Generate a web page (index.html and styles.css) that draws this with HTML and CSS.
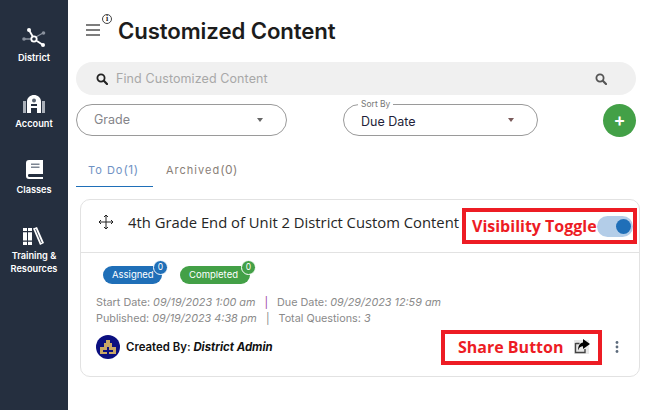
FILE: index.html
```html
<!DOCTYPE html>
<html lang="en">
<head>
<meta charset="utf-8">
<title>Customized Content</title>
<link rel="stylesheet" href="styles.css">
</head>
<body>
<div class="app">
  <nav class="sidebar">
    <a class="nav-item nav-district">
      <svg class="nav-icon" width="24" height="19" viewBox="0 0 24 19"><g stroke="#8a929e" stroke-width="1.300"><path d="M2 11h8M14 9l7-4"/></g><g stroke="#fff" stroke-width="1.800" fill="none"><path d="M7 2l4 7"/><path d="M15 13l6 4"/></g><circle cx="7" cy="2" r="2" fill="#fff"/><circle cx="12" cy="11" r="2.700" fill="none" stroke="#fff" stroke-width="1.800"/><circle cx="21" cy="17" r="2" fill="#fff"/><circle cx="2" cy="11" r="1.800" fill="#8a929e"/><circle cx="21.500" cy="5" r="1.800" fill="#8a929e"/></svg>
      <span>District</span>
    </a>
    <a class="nav-item nav-account">
      <svg class="nav-icon" width="22" height="18" viewBox="0 0 22 18"><path d="M0 6h3v12H0zM19 6h3v12h-3z" fill="#aab0b9"/><path d="M4 18V6.500C4 2.500 7.500 0 11 0s7 2.500 7 6.500V18h-4v-5H8v5z" fill="#fff"/><circle cx="11" cy="5.500" r="2" fill="#5a6472"/><rect x="8" y="9" width="6" height="2" fill="#252f3f"/></svg>
      <span>Account</span>
    </a>
    <a class="nav-item nav-classes">
      <svg class="nav-icon" width="17" height="19" viewBox="0 0 17 19"><path d="M3 0h14v14H3a1.600 1.600 0 0 0 0 3h14v2H3a3 3 0 0 1-3-3V3a3 3 0 0 1 3-3z" fill="#fff"/><path d="M5 3.500h8.500V5H5zM5 6.500h8.500V8H5z" fill="#7c8592"/></svg>
      <span>Classes</span>
    </a>
    <a class="nav-item nav-training">
      <svg class="nav-icon" width="21" height="18" viewBox="0 0 21 18"><path d="M0 1h4v17H0zM5 1h4v17H5z" fill="#fff"/><path d="M10 1.500L14 0l7 16-4 2z" fill="#fff"/><path d="M0 4h9v1.200H0zM0 13.500h9v1.200H0z" fill="#252f3f"/><path d="M12.500 2l6 14" stroke="#252f3f" stroke-width="0.800"/></svg>
      <span>Training &amp;<br>Resources</span>
    </a>
  </nav>
  <main class="main">
    <header class="page-head">
      <span class="menu-btn"><i></i><i></i><i></i></span>
      <span class="info-dot">i</span>
      <h1>Customized Content</h1>
    </header>
    <div class="search">
      <svg width="12" height="12" viewBox="0 0 12 12"><circle cx="5" cy="5" r="3.600" fill="none" stroke="#222" stroke-width="1.800"/><path d="M7.800 7.800L11 11" stroke="#222" stroke-width="2.200" stroke-linecap="round"/></svg>
      <span class="search-text">Find Customized Content</span>
      <svg class="search-end" width="12" height="12" viewBox="0 0 12 12"><circle cx="5" cy="5" r="3.600" fill="none" stroke="#555" stroke-width="1.800"/><path d="M7.800 7.800L11 11" stroke="#555" stroke-width="2.200" stroke-linecap="round"/></svg>
    </div>
    <div class="filters">
      <div class="select select-grade"><span class="select-value muted">Grade</span><b class="caret"></b></div>
      <div class="select select-sort"><span class="select-label">Sort By</span><span class="select-value">Due Date</span><b class="caret caret-red"></b></div>
      <div class="add-btn">+</div>
    </div>
    <div class="tabs">
      <span class="tab tab-active">To Do<em>(1)</em></span>
      <span class="tab tab-archived">Archived<em>(0)</em></span>
    </div>
    <section class="card">
      <div class="card-head">
        <svg width="16" height="16" viewBox="0 0 16 16" fill="none" stroke="#222" stroke-width="1"><path d="M8 1v14M1 8h14M6 3l2-2 2 2M6 13l2 2 2-2M3 6L1 8l2 2M13 6l2 2-2 2"/></svg>
        <h2>4th Grade End of Unit 2 District Custom Content</h2>
      </div>
      <div class="card-body">
        <div class="chips">
          <span class="chip chip-blue">Assigned<b>0</b></span>
          <span class="chip chip-green">Completed<b>0</b></span>
        </div>
        <p class="meta">Start Date: <i>09/19/2023 1:00 am</i> <span class="sep-purple">|</span> Due Date: <i>09/29/2023 12:59 am</i></p>
        <p class="meta">Published: <i>09/19/2023 4:38 pm</i> <span class="sep">|</span> Total Questions: <i>3</i></p>
        <div class="card-foot">
          <svg width="24" height="24" viewBox="0 0 24 24"><circle cx="12" cy="12" r="12" fill="#0b0f80"/><path d="M4 19v-7h4V8h2V5h4v3h2v4h4v7z" fill="#c9a765"/><path d="M7 15h10v2H7zM11 12h2v7h-2z" fill="#0b0f80"/></svg>
          <span class="author">Created By: <i>District Admin</i></span>
          <svg class="kebab" width="4" height="14" viewBox="0 0 4 14"><circle cx="2" cy="2.500" r="1.400" fill="#5d6b7c"/><circle cx="2" cy="7" r="1.400" fill="#5d6b7c"/><circle cx="2" cy="11.500" r="1.400" fill="#5d6b7c"/></svg>
        </div>
      </div>
    </section>
  </main>
  <div class="note note-toggle">
    <span class="note-text">Visibility Toggle</span>
    <span class="toggle"><i></i></span>
  </div>
  <div class="note note-share">
    <span class="note-text">Share Button</span>
    <svg width="16" height="15" viewBox="0 0 16 15"><rect x="0" y="1" width="15" height="14" fill="#e8e8e8"/><path d="M1.500 4.500h4M1.500 4v9.500h9.500V10" fill="none" stroke="#444" stroke-width="1.400"/><path d="M9 0l7 5-7 5V7.300C6.500 7.300 5 8.500 4 11.500c0-4.500 2-7.500 5-8z" fill="#000"/></svg>
  </div>
</div>
</body>
</html>
```
FILE: styles.css
```css
* { box-sizing: border-box; }
html, body { margin: 0; height: 100%; background: #fff; overflow: hidden; }
body { font-family: Inter, "Liberation Sans", sans-serif; color: #222; }
p, h1, h2 { margin: 0; }

.app { position: relative; display: flex; width: 651px; height: 410px; }

.sidebar {
  width: 68px;
  flex: none;
  background: #252f3f;
  color: #fff;
  display: flex;
  flex-direction: column;
  align-items: center;
  padding-top: 28px;
}
.nav-item {
  display: flex;
  flex-direction: column;
  align-items: center;
  gap: 4px;
  font-size: 9.200px;
  font-weight: 600;
  line-height: 13px;
  text-align: center;
}
.nav-icon { display: block; }
.nav-account { margin-top: 31px; }
.nav-classes { margin-top: 30px; }
.nav-training { margin-top: 31px; }

.main { flex: 1; min-width: 0; padding: 0 15px 0 8px; }

.page-head { position: relative; display: flex; align-items: center; height: 62px; padding: 0 0 2px 10px; }
.menu-btn { display: flex; flex-direction: column; gap: 3px; width: 14px; }
.menu-btn i { display: block; height: 2px; background: #7d7d7d; }
.info-dot {
  position: absolute;
  left: 26px;
  top: 14px;
  width: 10px;
  height: 10px;
  border: 1px solid #444;
  border-radius: 50%;
  font: 700 8px/8px "Liberation Serif", serif;
  text-align: center;
  color: #222;
}
h1 { margin-left: 18px; font-size: 22.200px; font-weight: 600; color: #1c1c1c; letter-spacing: -0.1px; }

.search {
  display: flex;
  align-items: center;
  height: 33px;
  padding: 0 29px 0 20px;
  border-radius: 17px;
  background: #f0f0f0;
  font-size: 12.500px;
}
.search-text { margin-left: 8px; color: #a8a8a8; letter-spacing: 0.1px; }
.search-end { margin-left: auto; }

.filters { display: flex; align-items: center; margin-top: 9px; height: 32px; }
.select {
  position: relative;
  display: flex;
  align-items: center;
  justify-content: space-between;
  height: 32px;
  border: 1px solid #9a9a9a;
  border-radius: 16px;
  padding: 0 23px 0 17px;
  font-size: 12.500px;
}
.select-grade { width: 211px; }
.select-sort { width: 195px; margin-left: 56px; }
.select-value { color: #1f1f3a; margin-top: 3px; }
.select-value.muted { color: #85858a; margin-top: -2px; }
.select-label {
  position: absolute;
  left: 14px;
  top: -6px;
  padding: 0 3px;
  background: #fff;
  font-size: 8.500px;
  line-height: 11px;
  color: #777;
}
.caret { width: 0; height: 0; border: 3.500px solid transparent; border-top: 4px solid #666; border-bottom: 0; }
.caret-red { border-top-color: #7a5a5a; }
.add-btn {
  width: 33px;
  height: 33px;
  margin-left: auto;
  border-radius: 50%;
  background: #43a047;
  color: #fff;
  font-size: 18px;
  font-weight: 600;
  line-height: 32px;
  text-align: center;
}

.tabs { display: flex; margin-top: 19px; height: 32px; font-size: 11px; letter-spacing: 1px; color: #8a8078; }
.tab { padding: 7px 12px 0; }
.tab em { font-style: normal; font-size: 12px; letter-spacing: 0.5px; }
.tab-active { width: 77px; color: #6f92c4; border-bottom: 1px solid #1f6fb8; }
.tab-archived { padding-left: 13px; }

.card {
  margin: 12px 0 0 4px;
  width: 560px;
  height: 178px;
  border: 1px solid #e2e2e2;
  border-radius: 10px;
}
.card-head {
  display: flex;
  align-items: center;
  height: 53px;
  padding: 0 0 8px 17px;
  border-bottom: 1px solid #e2e2e2;
}
.card-head h2 { margin-left: 14px; font: 400 14.800px "Open Sans", sans-serif; color: #262626; }
.card-body { padding: 13px 15px 0 15px; }
.chips { display: flex; gap: 18px; height: 18px; margin: 0 0 11px 7px; }
.chip {
  position: relative;
  display: block;
  height: 18px;
  padding: 0 9px;
  border-radius: 9px;
  color: #fff;
  font-size: 9.500px;
  line-height: 18px;
}
.chip-blue { width: 59px; background: #1f6fb8; }
.chip-green { width: 70px; background: #43a047; }
.chip b {
  position: absolute;
  right: -6px;
  top: -6px;
  width: 15px;
  height: 15px;
  border: 1px solid #fff;
  border-radius: 50%;
  background: inherit;
  font-size: 8.500px;
  font-weight: 400;
  line-height: 13px;
  text-align: center;
}
.meta { font-size: 10.800px; line-height: 16px; color: #8a8a8a; }
.sep-purple { color: #9b3fa0; margin: 0 6px; }
.sep { margin: 0 6px; }
.card-foot { display: flex; align-items: center; margin-top: 8px; height: 24px; }
.author { margin-left: 6px; font-size: 11.400px; font-weight: 600; color: #111; }
.author i { font-weight: 700; }
.kebab { margin-left: auto; margin-right: 5px; }

.note {
  position: absolute;
  display: flex;
  align-items: center;
  border: 4px solid #ed1c24;
  background: #fff;
  font: 700 16px "Open Sans", sans-serif;
  color: #ed1c24;
}
.note-text { white-space: nowrap; }
.note-toggle { left: 462px; top: 208px; width: 175px; height: 36px; padding-left: 6px; }
.toggle { flex: none; width: 36px; height: 21px; margin-left: auto; border-radius: 11px; background: #b3cde8; display: flex; align-items: center; justify-content: flex-end; padding-right: 2px; }
.toggle i { width: 15px; height: 15px; border-radius: 50%; background: #1f6fb8; }
.note-share { left: 441px; top: 330px; width: 161px; height: 35px; padding: 0 0 2px 13px; gap: 11px; }
```
